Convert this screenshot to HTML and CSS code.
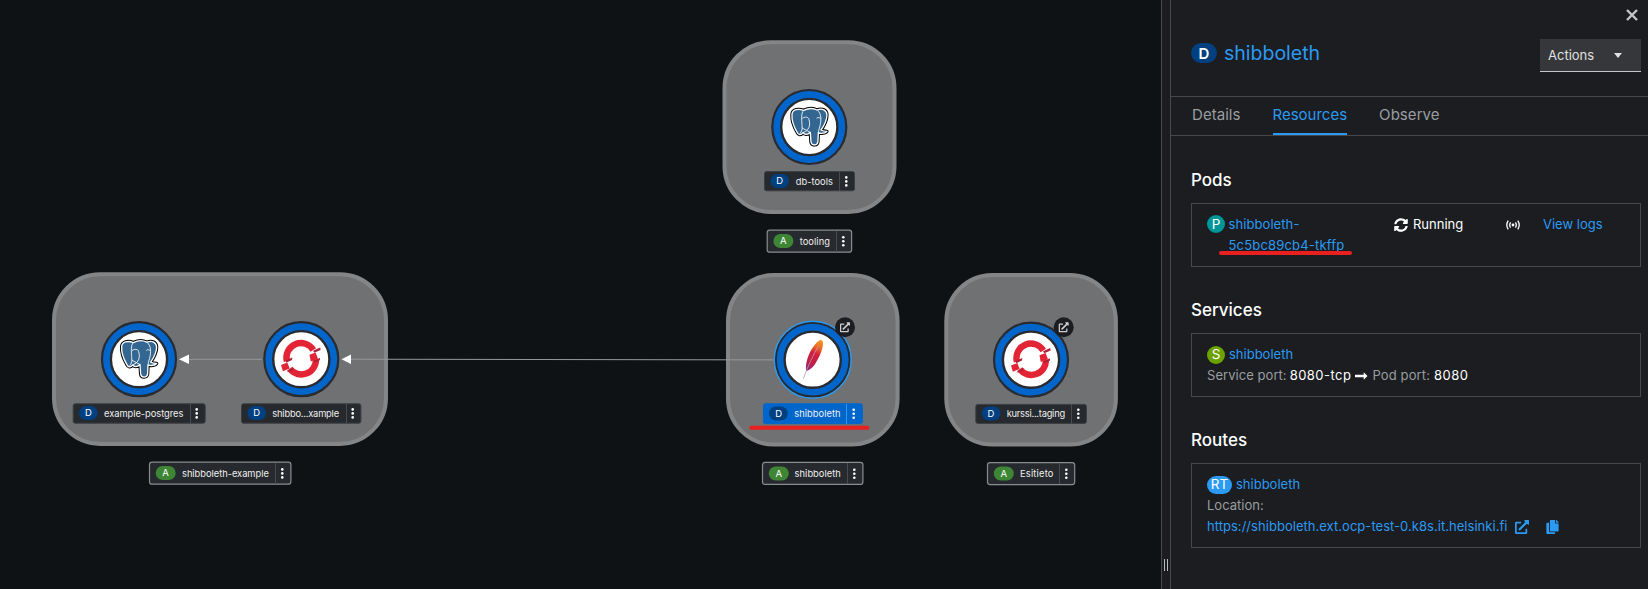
FILE: index.html
```html
<!DOCTYPE html>
<html lang="en">
<head>
<meta charset="utf-8">
<title>Topology</title>
<link rel="stylesheet" href="styles.css">
</head>
<body>
<div class="app">
  <main class="topology">
    <svg class="canvas" width="1161" height="589" viewBox="0 0 1161 589">
      <defs>
        <linearGradient id="plume" gradientUnits="userSpaceOnUse" x1="8" y1="-20" x2="-7" y2="12">
          <stop offset="0" stop-color="#f79a23"/><stop offset=".22" stop-color="#ee6d22"/>
          <stop offset=".42" stop-color="#d3203c"/><stop offset=".72" stop-color="#be2045"/><stop offset="1" stop-color="#7e2a83"/>
        </linearGradient>
        <g id="ring">
          <circle r="37" fill="#06c" stroke="#292b30" stroke-width="2.2"/>
          <circle r="28.1" fill="#fff" stroke="#292b30" stroke-width="2.4"/>
        </g>
        <path id="elephant" d="M-52-38C-51-53-33-56-17-50C-2-57 12-57 23-51C40-58 52-50 53-37C53-22 45-5 35 9C42 13 48 13 53 13C49 18 39 20 27 18L26 44C24 57 7 57 5 45L3 16C-6 25-15 23-19 17C-26 26-33 24-37 15C-47-2-53-22-52-38Z"/>
        <g id="postgres" transform="scale(.3333)">
          <use href="#elephant" class="pg-edge"/>
          <use href="#elephant" class="pg-inner"/>
          <path class="pg-line" d="M-17-50C-25-42-23-22-22-8C-22 4-19 8-28 19M24-51C38-38 35-20 33-8C32 0 28 6 27 18M-21-26C-12-32-3-30-1-23C3-10 1 0-5 8C-10 14-14 14-19 17M-22 2C-16 8-8 8-5 12L3 16M22-26C26-30 31-28 34-26"/>
        </g>
        <g id="openshift">
          <path d="M-14.4 2A14.5 14.5 0 0 1 12-9.2M-11.5 9.4A14.5 14.5 0 0 0 14.6 0" fill="none" stroke="#e22434" stroke-width="6.4"/>
          <path d="M8.2-4.4L14.3-6.8L16.7-.4L9.4 2.3ZM-20.3 5.7L-14 3.4L-11.6 9.2L-18.4 12Z" fill="#e22434"/>
          <path d="M11.8-8.4L18.9-11.7L19.3-9.2L13-6.5ZM12.4 1.7L18.8-1.4L18.5 1L13 3.5ZM-15.6 1.4L-8.9-1.7L-9.3.8L-15.2 3.5ZM-13.7 11.2L-7.8 8.6L-8 10.9L-13.8 13Z" fill="#ad213a"/>
        </g>
        <g id="feather">
          <path d="M7-19.5C9.5-20.5 10.5-18 10.3-15.5C9.7-9 6.5-2.5 3.4 2.5C2 6-1.5 9.5-6.5 11.5C-8-1 0-15 7-19.5Z" fill="url(#plume)"/>
          <path d="M6-14C1-6-5 7-9.3 19" fill="none" stroke="#ba9acb" stroke-width=".8"/>
        </g>
        <g id="open-link">
          <circle r="10" fill="#1b1d21"/>
          <path transform="translate(-5 -5) scale(.0195)" fill="#d0d0d0" d="M432,320H400a16,16,0,0,0-16,16V448H64V128H208a16,16,0,0,0,16-16V80a16,16,0,0,0-16-16H48A48,48,0,0,0,0,112V464a48,48,0,0,0,48,48H400a48,48,0,0,0,48-48V336A16,16,0,0,0,432,320ZM488,0h-128c-21.37,0-32.05,25.91-17,41l35.73,35.73L135,320.37a24,24,0,0,0,0,34L157.67,377a24,24,0,0,0,34,0L435.28,133.32,471,169c15,15,41,4.5,41-17V24A24,24,0,0,0,488,0Z"/>
        </g>
        <g id="kebab" fill="#fff"><circle cy="-4" r="1.3"/><circle r="1.3"/><circle cy="4" r="1.3"/></g>
      </defs>

      <g class="group">
        <rect x="54" y="274.3" width="332" height="169.6" rx="46"/>
        <rect x="724.5" y="42.3" width="170" height="169.6" rx="46"/>
        <rect x="728" y="275" width="169.6" height="169.6" rx="46"/>
        <rect x="946.3" y="275" width="169.6" height="169.6" rx="46"/>
      </g>

      <g class="edge">
        <path d="M189 359.3H262M351 359.2L773 359.9"/>
        <path class="arrow" d="M179 359.3L189 354.6V364ZM341.5 359.3L351 354.6V364Z"/>
      </g>

      <use href="#ring" x="139" y="359.2"/><use href="#ring" x="301.3" y="359.2"/>
      <use href="#ring" x="809.3" y="127"/><use href="#ring" x="1031" y="359.7"/>
      <use href="#ring" x="812.7" y="359.7"/>
      <circle class="selected-ring" cx="812.7" cy="359.7" r="38.5"/>
      <use href="#postgres" transform="translate(139 359.2)"/>
      <use href="#postgres" transform="translate(809.3 127)"/>
      <use href="#openshift" transform="translate(301.3 359.2)"/>
      <use href="#openshift" transform="translate(1031.3 359.7)"/>
      <use href="#feather" transform="translate(812.7 359.7)"/>
      <use href="#open-link" x="845" y="327.3"/>
      <use href="#open-link" x="1063.7" y="327.3"/>

      <g class="node-label">
        <rect class="box" x="73.2" y="403.8" width="132" height="19.4" rx="2"/>
        <rect class="pill" x="79" y="406" width="18.8" height="14" rx="7"/><text class="kind" x="88.4" y="416.2">D</text>
        <text x="104" y="416.7" textLength="79.4">example-postgres</text>
        <path d="M190.5 404V423"/><use href="#kebab" x="196.7" y="413.4"/>
      </g>
      <g class="node-label">
        <rect class="box" x="241.5" y="403.8" width="119.4" height="19.4" rx="2"/>
        <rect class="pill" x="247.3" y="406" width="18.8" height="14" rx="7"/><text class="kind" x="256.7" y="416.2">D</text>
        <text x="272.3" y="416.7" textLength="66.8">shibbo...xample</text>
        <path d="M346.5 404V423"/><use href="#kebab" x="352.7" y="413.4"/>
      </g>
      <g class="node-label">
        <rect class="box" x="764.5" y="171.6" width="90" height="19.2" rx="2"/>
        <rect class="pill" x="770.3" y="174" width="18.8" height="14" rx="7"/><text class="kind" x="779.7" y="184.2">D</text>
        <text x="795.7" y="184.7" textLength="37.2">db-tools</text>
        <path d="M839.5 172V191"/><use href="#kebab" x="846.3" y="181.4"/>
      </g>
      <g class="node-label node-selected">
        <rect class="box" x="763.4" y="403.8" width="99" height="19.8" rx="2"/>
        <rect class="pill" x="769" y="406.5" width="18.8" height="14" rx="7"/><text class="kind" x="778.6" y="417">D</text>
        <text x="794.3" y="417" textLength="46.2">shibboleth</text>
        <path d="M846.5 404V424"/><use href="#kebab" x="853.7" y="413.8"/>
      </g>
      <g class="node-label">
        <rect class="box" x="975.8" y="404.4" width="110.6" height="19" rx="2"/>
        <rect class="pill" x="981.7" y="406.5" width="18.8" height="14" rx="7"/><text class="kind" x="991" y="417">D</text>
        <text x="1006.7" y="417" textLength="58.4">kurssi...taging</text>
        <path d="M1071.5 404V424"/><use href="#kebab" x="1078.3" y="413.8"/>
      </g>

      <g class="group-label">
        <rect class="box" x="149.5" y="462.2" width="141.4" height="22" rx="2.5"/>
        <rect class="pill" x="155.7" y="466" width="20" height="14" rx="7"/><text class="kind" x="165.5" y="476.2">A</text>
        <text x="182" y="476.5" textLength="86.8">shibboleth-example</text>
        <path d="M275.5 463V484"/><use href="#kebab" x="282.3" y="473.4"/>
      </g>
      <g class="group-label">
        <rect class="box" x="767.2" y="230.2" width="84.4" height="22" rx="2.5"/>
        <rect class="pill" x="773.4" y="234" width="20" height="14" rx="7"/><text class="kind" x="783.3" y="244.2">A</text>
        <text x="799.7" y="244.6" textLength="30.2">tooling</text>
        <path d="M836.5 231V252"/><use href="#kebab" x="843.3" y="241.3"/>
      </g>
      <g class="group-label">
        <rect class="box" x="762.5" y="462.4" width="100.4" height="22" rx="2.5"/>
        <rect class="pill" x="768.8" y="466.5" width="20" height="14" rx="7"/><text class="kind" x="778.7" y="476.8">A</text>
        <text x="794.6" y="476.7" textLength="46.2">shibboleth</text>
        <path d="M847.5 463V484"/><use href="#kebab" x="854.3" y="473.8"/>
      </g>
      <g class="group-label">
        <rect class="box" x="987.5" y="462.6" width="87.2" height="22" rx="2.5"/>
        <rect class="pill" x="993.8" y="466.5" width="20" height="14" rx="7"/><text class="kind" x="1003.7" y="476.8">A</text>
        <text x="1020" y="476.7" textLength="33.4">Esitieto</text>
        <path d="M1059.5 463V484"/><use href="#kebab" x="1066.3" y="473.8"/>
      </g>
      <path class="marker" d="M751.3 427.7H867.3"/>
    </svg>
  </main>

  <div class="splitter"><span class="grip"></span></div>

  <aside class="panel">
    <header class="panel-head">
      <svg class="close" width="12" height="12" viewBox="0 0 12 12"><path d="M1 1L11 11M11 1L1 11"/></svg>
      <div class="title-row">
        <span class="badge badge-lg">D</span>
        <h1>shibboleth</h1>
        <button class="actions"><span>Actions</span><svg width="8" height="5" viewBox="0 0 8 5"><path d="M0 0H8L4 5Z"/></svg></button>
      </div>
    </header>
    <nav class="tabs"><span class="tab">Details</span><span class="tab tab-active">Resources</span><span class="tab">Observe</span></nav>

    <section>
      <h2>Pods</h2>
      <div class="card pod-row">
        <div class="pod-name"><span class="badge pod">P</span><a class="pod-link">shibboleth-<br><span class="pod-id">5c5bc89cb4-tkffp</span></a></div>
        <div class="status"><svg width="14" height="14" viewBox="0 0 512 512"><path d="M370.72 133.28C339.458 104.008 298.888 87.962 255.848 88c-77.458.068-144.328 53.178-162.791 126.85-1.344 5.363-6.122 9.15-11.651 9.15H24.103c-7.498 0-13.194-6.807-11.807-14.176C33.933 94.924 134.813 8 256 8c66.448 0 126.791 26.136 171.315 68.685L463.03 40.97C478.149 25.851 504 36.559 504 57.941V192c0 13.255-10.745 24-24 24H345.941c-21.382 0-32.09-25.851-16.971-40.971l41.75-41.749zM32 296h134.059c21.382 0 32.09 25.851 16.971 40.971l-41.75 41.75c31.262 29.273 71.835 45.319 114.876 45.28 77.418-.07 144.315-53.144 162.787-126.849 1.344-5.363 6.122-9.15 11.651-9.15h57.304c7.498 0 13.194 6.807 11.807 14.176C478.067 417.076 377.187 504 256 504c-66.448 0-126.791-26.136-171.315-68.685L48.97 471.03C33.851 486.149 8 475.441 8 454.059V320c0-13.255 10.745-24 24-24z"/></svg><span class="running">Running</span></div>
        <svg class="signal" width="14" height="10" viewBox="0 0 14 10"><circle cx="7" cy="5" r="1.4"/><path d="M4.6 2.3Q2.8 5 4.6 7.7M9.4 2.3Q11.2 5 9.4 7.7M2.2.6Q-.6 5 2.2 9.4M11.8.6Q14.6 5 11.8 9.4"/></svg>
        <a class="logs">View logs</a>
        <span class="underline"></span>
      </div>
    </section>
    <section>
      <h2>Services</h2>
      <div class="card">
        <div class="line"><span class="badge svc">S</span><a>shibboleth</a></div>
        <div class="line ports"><span class="muted sp">Service port:</span><span class="tcp">8080-tcp</span><svg width="13" height="8" viewBox="0 0 13 8"><path d="M0 2.8H8.7V.3L12.5 4L8.7 7.7V5.2H0Z"/></svg><span class="muted pp">Pod port:</span><span class="pod-port">8080</span></div>
      </div>
    </section>
    <section>
      <h2 class="h-routes">Routes</h2>
      <div class="card">
        <div class="line"><span class="badge rt">RT</span><a>shibboleth</a></div>
        <div class="line muted loc">Location:</div>
        <div class="line"><a class="url">https://shibboleth.ext.ocp-test-0.k8s.it.helsinki.fi</a>
          <svg class="ext" width="14" height="14" viewBox="0 0 512 512"><path d="M432,320H400a16,16,0,0,0-16,16V448H64V128H208a16,16,0,0,0,16-16V80a16,16,0,0,0-16-16H48A48,48,0,0,0,0,112V464a48,48,0,0,0,48,48H400a48,48,0,0,0,48-48V336A16,16,0,0,0,432,320ZM488,0h-128c-21.37,0-32.05,25.91-17,41l35.73,35.73L135,320.37a24,24,0,0,0,0,34L157.67,377a24,24,0,0,0,34,0L435.28,133.32,471,169c15,15,41,4.5,41-17V24A24,24,0,0,0,488,0Z"/></svg>
          <svg class="copy" width="13" height="14" viewBox="0 0 448 512"><path d="M320 448v40c0 13.255-10.745 24-24 24H24c-13.255 0-24-10.745-24-24V120c0-13.255 10.745-24 24-24h72v296c0 30.879 25.121 56 56 56h168zm0-344V0H152c-13.255 0-24 10.745-24 24v368c0 13.255 10.745 24 24 24h272c13.255 0 24-10.745 24-24V128H344c-13.2 0-24-10.8-24-24zm120.971-31.029L375.029 7.029A24 24 0 0 0 358.059 0H352v96h96v-6.059a24 24 0 0 0-7.029-16.97z"/></svg>
        </div>
      </div>
    </section>
  </aside>
</div>
</body>
</html>
```
FILE: styles.css
```css
* { box-sizing: border-box; }
body { margin: 0; background: #0f1214; color: #fff; font: 13px/21px Inter, "Open Sans", sans-serif; overflow: hidden; }
svg { display: block; flex: none; }
.app { display: flex; height: 589px; }
.topology { width: 1161px; flex: none; background: #0f1214; }

.group rect { fill: #707173; stroke: #848587; stroke-width: 4; }
.edge path { fill: none; stroke: #98999b; stroke-width: 1; }
.edge .arrow { fill: #fff; stroke: none; }
.selected-ring { fill: none; stroke: #2b9af3; stroke-width: 1.4; }
.pg-edge { fill: #000; stroke: #000; stroke-width: 10; stroke-linejoin: round; }
.pg-inner { fill: #336791; stroke: #fff; stroke-width: 4; stroke-linejoin: round; }
.pg-line { fill: none; stroke: #fff; stroke-width: 2.6; }
.node-label text, .group-label text { fill: #f0f0f0; font-size: 9.3px; }
.node-label .kind, .group-label .kind { fill: #fff; font-size: 9.5px; text-anchor: middle; }
.node-label .box, .group-label .box { fill: #26292d; stroke: #3c3f42; }
.group-label .box { stroke: #8a8d90; stroke-width: 1.2; }
.node-label path, .group-label path { stroke: #494b4f; }
.node-label .pill { fill: #004080; }
.group-label .pill { fill: #3e8635; }
.node-selected .box { fill: #06c; stroke: #06c; }
.node-selected > path { stroke: #2b9af3; }
.marker { stroke: #e8201f; stroke-width: 4; stroke-linecap: round; }

.splitter { width: 10px; flex: none; background: #1b1d21; border: solid #46484c; border-width: 0 1px; display: flex; flex-direction: column; justify-content: flex-end; align-items: center; padding-bottom: 18px; }
.grip { width: 4px; height: 12px; border: solid #b8bbbe; border-width: 0 1px; }

.panel { width: 477px; flex: none; background: #1b1d21; }
.panel-head { height: 97px; border-bottom: 1px solid #46484c; padding: 9px 7px 0 20px; }
.close { margin: 0 3px 0 auto; fill: none; stroke: #c4c6c8; stroke-width: 2.4; }
.title-row { display: flex; align-items: flex-start; padding-top: 18px; }
.badge { display: flex; align-items: center; justify-content: center; flex: none; width: 18px; height: 18px; border-radius: 10px; font-size: 13.5px; color: #fff; }
.badge-lg { width: 26px; height: 20px; margin: 4px 7px 0 0; background: #004080; font-weight: 600; font-size: 15px; }
h1 { margin: 0; flex: 1; padding-top: 1px; font-size: 19.5px; line-height: 26px; font-weight: 400; color: #2b9af3; }
.actions { display: flex; align-items: center; justify-content: space-between; width: 101px; height: 33px; padding: 0 19px 0 8px; border: 0; border-bottom: 1px solid #c4c6c8; background: #36373a; color: #e0e0e0; font: 13px Inter, sans-serif; }
.actions svg { fill: #e0e0e0; }

.tabs { display: flex; gap: 32px; height: 39px; padding-left: 21px; border-bottom: 1px solid #46484c; font-size: 15px; line-height: 36px; color: #9a9da0; }
.tab { height: 38px; letter-spacing: .05px; }
.tab-active { color: #2b9af3; border-bottom: 2px solid #2b9af3; letter-spacing: 0; }

section { padding: 0 7px 0 20px; }
h2 { margin: 0; height: 67px; padding-top: 32px; font-size: 17px; line-height: 24px; font-weight: 550; }
section + section h2 { height: 66px; padding-top: 31px; }
.card { border: 1px solid #46484c; padding: 10px 15px; }
a { color: #2b9af3; }
.muted { color: #9a9da0; }
.line { display: flex; align-items: center; height: 21px; }
.badge + a { margin-left: 4px; }
.badge + .pod-link { margin-left: 3.5px; letter-spacing: .08px; }
.pod-id { letter-spacing: .18px; }
.pod { background: #009596; }
.svc { background: #6ca100; }
.rt { width: 25px; background: #2b9af3; }
.pod-row { display: flex; align-items: flex-start; height: 64px; position: relative; }
.pod-name { display: flex; width: 187px; }
.pod { margin-top: 1px; }
.status { display: flex; align-items: center; gap: 5px; width: 112px; }
.status svg, .signal, .ports svg { fill: #fff; }
.signal { margin-top: 6px; stroke: #fff; stroke-width: 1.3; }
.signal path { fill: none; }
.signal circle { stroke: none; }
.logs { margin-left: 23px; }
.underline { position: absolute; left: 27px; top: 47px; width: 133px; height: 4px; border-radius: 2px; background: #e8201f; }
.sp { letter-spacing: .05px; }
.tcp { margin: 0 4px 0 3px; letter-spacing: .48px; }
.ports .pp { margin: 0 4px; letter-spacing: .12px; }
.pod-port { letter-spacing: .45px; }
.url { letter-spacing: .035px; }
.ext { margin-left: 8px; fill: #2b9af3; }
.copy { margin-left: 17px; fill: #2b9af3; }
```
